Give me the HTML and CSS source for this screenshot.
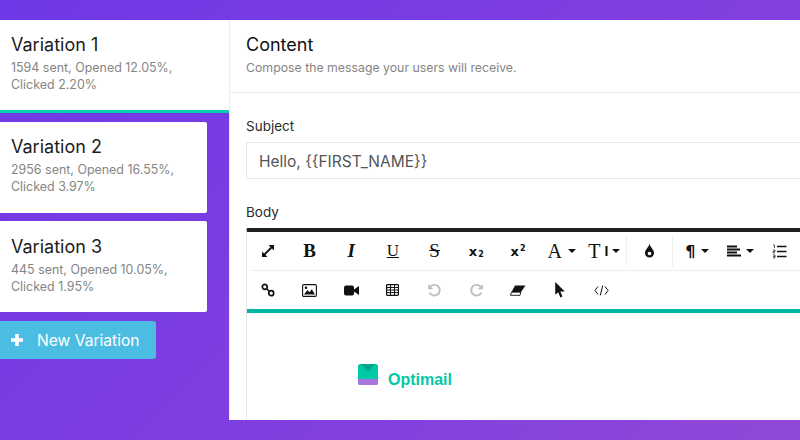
FILE: index.html
```html
<!DOCTYPE html>
<html lang="en">
<head>
<meta charset="utf-8">
<title>Variations</title>
<link rel="stylesheet" href="styles.css">
</head>
<body>
<div class="app">
  <aside class="sidebar">
    <div class="tab active">
      <h2>Variation 1</h2>
      <p>1594 sent, Opened 12.05%,<br>Clicked 2.20%</p>
    </div>
    <div class="tab card">
      <h2>Variation 2</h2>
      <p>2956 sent, Opened 16.55%,<br>Clicked 3.97%</p>
    </div>
    <div class="tab card">
      <h2>Variation 3</h2>
      <p>445 sent, Opened 10.05%,<br>Clicked 1.95%</p>
    </div>
    <button class="new-btn"><svg class="plus" viewBox="0 0 14 14"><path d="M5.200 1h3.600v4.200H13v3.600H8.800V13H5.200V8.800H1V5.200h4.200z" fill="#fff"/></svg><span>New Variation</span></button>
  </aside>
  <main class="content">
    <header class="head">
      <h1>Content</h1>
      <p>Compose the message your users will receive.</p>
    </header>
    <section class="form">
      <label class="lbl">Subject</label>
      <div class="input">Hello, {{FIRST_NAME}}</div>
      <label class="lbl body-lbl">Body</label>
      <div class="editor">
        <div class="row row1">
          <span class="tool"><svg width="14" height="14" viewBox="0 0 14 14"><path d="M2 12 12 2" stroke="#111" stroke-width="1.800"/><path d="M7.500 1H13v5.500zM1 7.500V13h5.500z" fill="#111"/></svg></span>
          <span class="tool serif b">B</span>
          <span class="tool serif i">I</span>
          <span class="tool serif u">U</span>
          <span class="tool serif s">S</span>
          <span class="tool sub">x<small>2</small></span>
          <span class="tool sub">x<sup>2</sup></span>
          <span class="tool a-tool serif b">A<i class="caret"></i></span>
          <span class="tool t-tool serif tt">T<b class="tt2">I</b><i class="caret"></i></span>
          <span class="sep"></span>
          <span class="tool drop"><svg width="11" height="14" viewBox="0 0 11 14"><path d="M5.500 0C4.800 3 1 5.700 1 9a4.500 4.500 0 0 0 9 0C10 5.700 6.200 3 5.500 0z" fill="#111"/><circle cx="5.500" cy="9.500" r="1.800" fill="#fff"/></svg></span>
          <span class="sep"></span>
          <span class="tool para">¶<i class="caret"></i></span>
          <span class="tool align"><svg width="15" height="12" viewBox="0 0 15 12"><path d="M1 1.500h10M1 4.500h13M1 7.500h10M1 10.500h14" stroke="#111" stroke-width="1.800"/></svg><i class="caret"></i></span>
          <span class="tool"><svg width="15" height="15" viewBox="0 0 15 15"><path d="M5 2.500h9.500M5 7.500h9.500M5 12.500h9.500" stroke="#111" stroke-width="1.700"/><path d="M1 1h1.500v3M1 6h2v1.500H1V9h2M1 11h2v3H1M1 12.500h2" stroke="#111" stroke-width=".7" fill="none"/></svg></span>
        </div>
        <div class="row row2">
          <span class="tool"><svg width="14" height="14" viewBox="0 0 14 14"><circle cx="3.800" cy="3.800" r="2.500" fill="none" stroke="#111" stroke-width="1.700"/><circle cx="10.200" cy="10.200" r="2.500" fill="none" stroke="#111" stroke-width="1.700"/><path d="M5.500 5.500l3 3" stroke="#111" stroke-width="1.700"/></svg></span>
          <span class="tool"><svg width="15" height="13" viewBox="0 0 15 13"><rect x=".6" y=".6" width="13.800" height="11.800" rx="1.200" fill="none" stroke="#111" stroke-width="1.100"/><path d="M2 10.500 5.500 6l2 2.300 2.300-3 3.200 5.200z" fill="#111"/><circle cx="4" cy="3.800" r="1.300" fill="#111"/></svg></span>
          <span class="tool"><svg width="15" height="11" viewBox="0 0 15 11"><rect x="0" y=".5" width="10" height="10" rx="2" fill="#111"/><path d="M10 4.500 15 1v9L10 6.500z" fill="#111"/></svg></span>
          <span class="tool"><svg width="13" height="12" viewBox="0 0 13 12"><rect x=".6" y=".6" width="11.800" height="10.800" rx=".8" fill="none" stroke="#111" stroke-width="1.200"/><path d="M.6 3.500h11.800M.6 6h11.800M.6 8.600h11.800M4.500 1v10.500M8.500 1v10.500" stroke="#111" stroke-width="1"/></svg></span>
          <span class="tool"><svg width="15" height="15" viewBox="0 0 13 13"><path d="M3 3.200a4.600 4.600 0 1 1-.6 5.200" fill="none" stroke="#bdbdbd" stroke-width="1.700"/><path d="M1 1v4.500h4.500z" fill="#bdbdbd"/></svg></span>
          <span class="tool"><svg width="15" height="15" viewBox="0 0 13 13"><path d="M10 3.200a4.600 4.600 0 1 0 .6 5.200" fill="none" stroke="#bdbdbd" stroke-width="1.700"/><path d="M12 1v4.500H7.500z" fill="#bdbdbd"/></svg></span>
          <span class="tool"><svg width="16" height="11" viewBox="0 0 16 11"><path d="M5 .5h10.500L11 7H1.500z" fill="#111"/><path d="M1.500 7.200 .5 10.300h9.500L11 7.200z" fill="none" stroke="#111" stroke-width=".9"/></svg></span>
          <span class="tool"><svg width="11" height="16" viewBox="0 0 10 15"><path d="M1 0v12l2.800-2.500L5.800 14.500l2-.9-2-4.800H10z" fill="#111"/></svg></span>
          <span class="tool"><svg width="15" height="11" viewBox="0 0 15 11"><path d="M4 1.500.9 5.500 4 9.500M11 1.500l3.100 4-3.100 4M8.700.7 6.300 10.300" fill="none" stroke="#111" stroke-width="1"/></svg></span>
        </div>
        <div class="canvas">
          <div class="brand">
            <svg class="logo" width="20" height="21" viewBox="0 0 20 21"><rect width="20" height="21" rx="2.500" fill="#00c9a7"/><path d="M0 15h20v3.500a2.500 2.500 0 0 1-2.500 2.500h-15A2.500 2.500 0 0 1 0 18.500z" fill="#a974e0"/><path d="M3 0h14l-7 7.500z" fill="#00a58c"/></svg>
            <span>Optimail</span>
          </div>
        </div>
      </div>
    </section>
  </main>
</div>
</body>
</html>
```
FILE: styles.css
```css
* { box-sizing: border-box; }
html, body { margin: 0; height: 100%; }
body {
  width: 800px;
  height: 440px;
  overflow: hidden;
  background: linear-gradient(135deg, #6f38e6 0%, #803ee0 55%, #9048d6 100%);
  font-family: Inter, "Liberation Sans", sans-serif;
  padding: 20px 0;
}
.app { display: flex; height: 400px; }
.sidebar { width: 229px; flex: none; display: flex; flex-direction: column; }
.tab h2 { margin: 0 0 3px; font-size: 18px; line-height: 22px; font-weight: 400; color: #1c1c1c; }
.tab p { margin: 0; font-size: 12.450px; line-height: 17px; color: #858585; }
.tab { background: #fff; padding: 14px 11px 0; height: 93px; }
.tab.active { border-bottom: 3px solid #00d0ae; margin-bottom: 9px; }
.tab.card { width: 207px; height: 91px; margin-bottom: 8px; border-radius: 0 2px 2px 0; padding-top: 14px; }
.tab.card + .tab.card { padding-top: 15px; }
.new-btn {
  width: 156px; height: 38px; margin-top: 1px; padding: 0 0 0 10px;
  display: flex; align-items: center; gap: 13px;
  background: #4bbde3; border: 0; border-radius: 0 3px 3px 0;
  color: #fff; font: 400 15.600px Inter, "Liberation Sans", sans-serif;
}
.plus { width: 14px; height: 14px; }
.content { flex: 1; border-left: 1px solid #efeaf8; background: #fff; min-width: 0; }
.head { height: 73px; padding: 14px 16px 0; border-bottom: 1px solid #eee; }
.head h1 { margin: 0; font-size: 18px; line-height: 22px; font-weight: 400; color: #111; }
.head p { margin: 3px 0 0; font-size: 12.300px; line-height: 18px; color: #858585; }
.form { padding: 24px 0 0 16px; }
.lbl { display: block; font-size: 13.500px; line-height: 18px; color: #2a2a2a; }
.input {
  margin-top: 7px; height: 37px; padding: 1px 0 0 12px;
  border: 1px solid #e6e6e6; border-right: 0;
  display: flex; align-items: center;
  font-size: 15.500px; color: #555;
}
.body-lbl { margin-top: 24px; }
.editor {
  margin-top: 7px;
  border-top: 4px solid #1f1f1f;
  border-left: 1px solid #e4e4e4;
  border-radius: 2px 0 0 0;
}
.row { display: flex; align-items: center; }
.row1 { height: 39px; border-bottom: 1px solid #eee; margin-left: 4px; padding-left: 0; }
.row1 .tool:first-child { margin-left: -4px; }
.row2 { height: 42px; border-bottom: 4px solid #00b8a2; }
.tool {
  width: 41.700px; height: 30px; flex: none;
  display: flex; align-items: center; justify-content: center;
  font-size: 14px; color: #111;
}
.a-tool { width: 44px; gap: 6px; padding-left: 2px; }
.t-tool { width: 43px; gap: 4px; }
.sep { width: 1px; height: 30px; background: #eee; flex: none; }
.drop { width: 45px; }
.para { width: 49px; gap: 6px; font-size: 16px; font-weight: 700; font-family: "DejaVu Sans", sans-serif; }
.align { width: 37px; gap: 5px; }
.serif { font-family: "Liberation Serif", serif; font-size: 19px; }
.b { font-weight: 700; }
.a-tool.serif { font-size: 20px; font-weight: 400; }
.i { font-style: italic; font-weight: 700; }
.u { text-decoration: underline; font-weight: 400; font-size: 17px; }
.s { text-decoration: line-through; font-size: 19px; }
.sub { font-family: "DejaVu Sans", sans-serif; font-weight: 700; font-size: 13px; }
.sub small { font-size: 8px; align-self: flex-end; margin: 0 0 7px 1px; }
.sub sup { font-size: 8px; margin: -6px 0 0 1px; }
.tt { font-size: 20px; }
.tt2 { font-size: 14px; font-family: "Liberation Sans", sans-serif; }
.caret {
  display: inline-block; width: 0; height: 0;
  border-left: 4px solid transparent; border-right: 4px solid transparent;
  border-top: 4px solid #111;
}
.canvas { height: 107px; padding: 53px 0 0 111px; }
.brand { display: flex; align-items: center; gap: 10px; }
.logo { margin-top: -7px; }
.brand span { font: 700 16px "Liberation Sans", sans-serif; color: #00c9a7; margin-top: 5px; }
```
